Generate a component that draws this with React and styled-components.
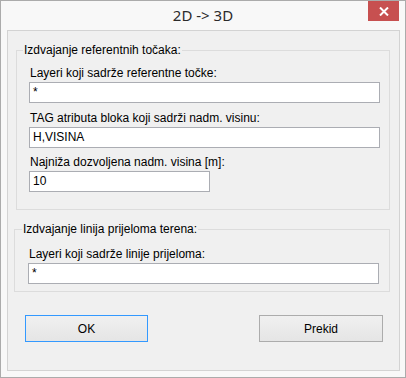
import React from "react";
import styled, { createGlobalStyle } from "styled-components";

const GlobalStyle = createGlobalStyle`
  html, body {
    margin: 0;
    padding: 0;
    background: #ffffff;
  }
  body {
    font-family: "Liberation Sans", Arial, sans-serif;
  }
`;

const Window = styled.div`
  box-sizing: border-box;
  width: 406px;
  height: 378px;
  border: 1px solid #ababab;
  background: #f8f8f8;
  display: flex;
  flex-direction: column;
`;

const TitleBar = styled.div`
  height: 29px;
  display: flex;
  align-items: flex-start;
  justify-content: center;
  position: relative;
`;

const Title = styled.div`
  font-family: "Noto Sans", "Open Sans", sans-serif;
  font-size: 15px;
  line-height: 28px;
  color: #2b2b2b;
`;

const CloseButton = styled.div`
  position: absolute;
  top: 0;
  right: 6px;
  width: 31px;
  height: 20px;
  background: #c75050;
  display: flex;
  align-items: center;
  justify-content: center;
`;

const Client = styled.div`
  box-sizing: border-box;
  width: 393px;
  height: 341px;
  margin-left: 6px;
  border: 1px solid #d3d3d3;
  background: #f0f0f0;
  display: flex;
  flex-direction: column;
`;

const GroupBox = styled.div`
  box-sizing: border-box;
  margin: ${(p) => p.$margin};
  width: ${(p) => p.$width}px;
  height: ${(p) => p.$height}px;
  border: 1px solid #dcdcdc;
  padding: 0 9px 0 ${(p) => p.$padLeft}px;
  display: flex;
  flex-direction: column;
`;

const Caption = styled.span`
  align-self: flex-start;
  margin: -8px 0 0 ${(p) => p.$offset}px;
  padding: 0 1px;
  background: #f0f0f0;
  font-size: 12px;
  line-height: 15px;
  color: #000;
`;

const Field = styled.div`
  display: flex;
  flex-direction: column;
  margin-top: ${(p) => p.$top}px;
`;

const Label = styled.div`
  font-size: 12px;
  line-height: 14px;
  height: 14px;
  padding-left: 1px;
  margin-bottom: 2px;
  color: #000;
`;

const Input = styled.div`
  box-sizing: border-box;
  width: ${(p) => p.$width}px;
  height: 21px;
  border: 1px solid #abadb3;
  background: #ffffff;
  font-size: 12px;
  line-height: 19px;
  padding-left: 3px;
  color: #000;
`;

const ButtonRow = styled.div`
  display: flex;
  justify-content: space-between;
  padding: 0 16px 0 17px;
  margin-top: 23px;
`;

const Button = styled.div`
  box-sizing: border-box;
  width: ${(p) => p.$width}px;
  height: 27px;
  border: 1px solid ${(p) => (p.$default ? "#3399ff" : "#acacac")};
  background: linear-gradient(#f0f0f0, #e5e5e5);
  display: flex;
  align-items: center;
  justify-content: center;
  font-size: 12px;
  color: #000;
`;

const App = () => {
  return (
    <>
      <GlobalStyle />
      <Window>
        <TitleBar>
          <Title>2D -&gt; 3D</Title>
          <CloseButton>
            <svg width="10" height="9" viewBox="0 0 10 9">
              <path d="M1 0.5 L9 8.5 M9 0.5 L1 8.5" stroke="#ffffff" strokeWidth="2" />
            </svg>
          </CloseButton>
        </TitleBar>
        <Client>
          <GroupBox $margin="19px 0 0 8px" $width={374} $height={160} $padLeft={12}>
            <Caption $offset={-6}>Izdvajanje referentnih točaka:</Caption>
            <Field $top={8}>
              <Label>Layeri koji sadrže referentne točke:</Label>
              <Input $width={351}>*</Input>
            </Field>
            <Field $top={8}>
              <Label>TAG atributa bloka koji sadrži nadm. visinu:</Label>
              <Input $width={351}>H,VISINA</Input>
            </Field>
            <Field $top={7}>
              <Label>Najniža dozvoljena nadm. visina [m]:</Label>
              <Input $width={181}>10</Input>
            </Field>
          </GroupBox>
          <GroupBox $margin="19px 0 0 6px" $width={376} $height={63} $padLeft={13}>
            <Caption $offset={-6}>Izdvajanje linija prijeloma terena:</Caption>
            <Field $top={10}>
              <Label>Layeri koji sadrže linije prijeloma:</Label>
              <Input $width={351}>*</Input>
            </Field>
          </GroupBox>
          <ButtonRow>
            <Button $width={123} $default>OK</Button>
            <Button $width={124}>Prekid</Button>
          </ButtonRow>
        </Client>
      </Window>
    </>
  );
};

export default App;
